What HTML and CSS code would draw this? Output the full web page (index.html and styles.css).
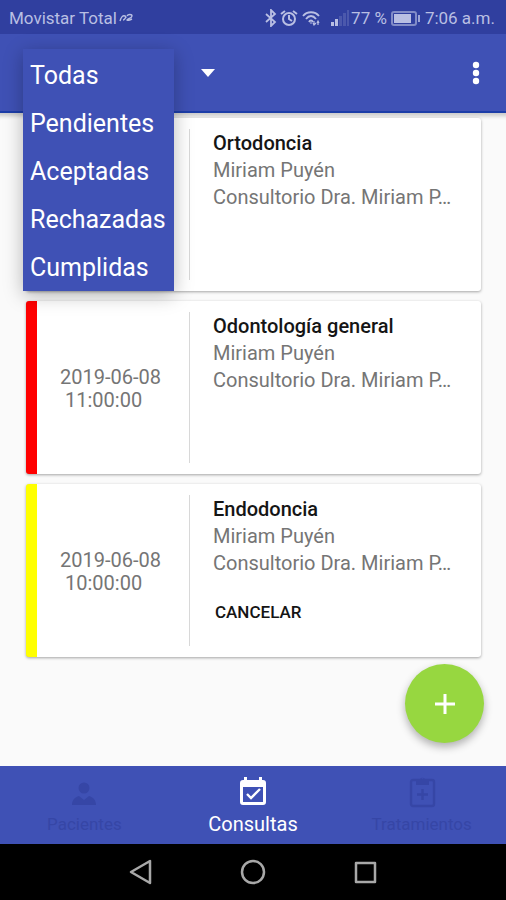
FILE: index.html
```html
<!DOCTYPE html>
<html lang="es">
<head>
<meta charset="utf-8">
<meta name="viewport" content="width=device-width, initial-scale=1">
<title>Consultas</title>
<link rel="stylesheet" href="styles.css">
</head>
<body>
<div class="status">
  <span class="carrier">Movistar Total</span>
  <svg class="mark" width="14" height="10" viewBox="0 0 14 10" fill="none" stroke="currentColor" stroke-width="1.4"><path d="M1 8C2 4 4 2 6 3S5 7 4 7M6 3c1 0 1 1 1 2M8 3c1-2 5-2 5 0S8 6 8 7s3 0 5-1"/></svg>
  <div class="indicators">
    <svg width="12" height="18" viewBox="0 0 12 18" fill="none" stroke="currentColor" stroke-width="1.8"><path d="M1 5l9 8-4 4V1l4 4-9 8"/></svg>
    <svg class="alarm" width="18" height="18" viewBox="0 0 18 18" fill="none" stroke="currentColor" stroke-width="2"><circle cx="9" cy="10" r="6"/><path d="M9 6v4l3 2M1 5l4-3M17 5l-4-3"/></svg>
    <svg class="wifi" width="18" height="16" viewBox="0 0 18 16" fill="none" stroke="currentColor" stroke-width="1.8"><path d="M1 6C5 1 13 1 17 6M4 9c3-4 7-4 10 0M7 12c1-2 3-2 4 0"/><path d="M8 13h2M12 11v4M11 13l1 2 2-2M16 15v-4M15 13l1-2 1 2" stroke-width="1.2"/></svg>
    <svg class="signal" width="19" height="16" viewBox="0 0 19 16" fill="currentColor"><path d="M1 12h3v4H1zM5 9h3v7H5z"/><path opacity=".2" d="M9 6h3v10H9zM13 3h3v13h-3zM17 0h2v16h-2z"/></svg>
    <span>77 %</span>
    <svg class="battery" width="29" height="15" viewBox="0 0 29 15"><rect x="1" y="1" width="24" height="13" rx="2" fill="none" stroke="currentColor" stroke-width="2" opacity=".6"/><path fill="currentColor" d="M3 3h17v9H3z"/><path fill="currentColor" opacity=".8" d="M27 4h2v7h-2z"/></svg>
    <span>7:06 a.m.</span>
  </div>
</div>

<header class="appbar">
  <div class="filter">
    <button class="filter-toggle" type="button" aria-label="Filtrar consultas" aria-expanded="true">
      <svg width="14" height="8" viewBox="0 0 14 8" fill="currentColor"><path d="M0 0h14L7 8z"/></svg>
    </button>
    <ul class="menu">
      <li><button type="button">Todas</button></li>
      <li><button type="button">Pendientes</button></li>
      <li><button type="button">Aceptadas</button></li>
      <li><button type="button">Rechazadas</button></li>
      <li><button type="button">Cumplidas</button></li>
    </ul>
  </div>
  <button class="more" type="button" aria-label="Más opciones">
    <svg width="8" height="24" viewBox="0 0 8 24" fill="currentColor"><circle cx="4" cy="4" r="3.2"/><circle cx="4" cy="12" r="3.2"/><circle cx="4" cy="20" r="3.2"/></svg>
  </button>
</header>

<main class="list">
  <article class="card">
    <div class="when"></div>
    <div class="info">
      <h2>Ortodoncia</h2>
      <p>Miriam Puyén</p>
      <p>Consultorio Dra. Miriam P…</p>
    </div>
  </article>
  <article class="card rejected">
    <div class="when"><time datetime="2019-06-08T11:00">2019-06-08 <span>11:00:00</span></time></div>
    <div class="info">
      <h2>Odontología general</h2>
      <p>Miriam Puyén</p>
      <p>Consultorio Dra. Miriam P…</p>
    </div>
  </article>
  <article class="card pending">
    <div class="when"><time datetime="2019-06-08T10:00">2019-06-08 <span>10:00:00</span></time></div>
    <div class="info">
      <h2>Endodoncia</h2>
      <p>Miriam Puyén</p>
      <p>Consultorio Dra. Miriam P…</p>
      <button class="cancel" type="button">CANCELAR</button>
    </div>
  </article>
  <button class="fab" type="button" aria-label="Nueva consulta">
    <svg width="22" height="22" viewBox="0 0 22 22" stroke="currentColor" stroke-width="3"><path d="M11 1v20M1 11h20"/></svg>
  </button>
</main>

<nav class="tabs">
  <a class="tab" href="#pacientes">
    <svg width="32" height="32" viewBox="0 0 32 32" fill="currentColor"><circle cx="16" cy="12" r="5.5"/><path d="M4 29c0-5 3-8 7-9l5 4 5-4c4 1 7 4 7 9z"/></svg>
    <span>Pacientes</span>
  </a>
  <a class="tab active" href="#consultas" aria-current="page">
    <svg width="32" height="32" viewBox="0 0 32 32"><path fill="currentColor" fill-rule="evenodd" d="M7 1h3v3h12V1h3v3h1a3 3 0 0 1 3 3v19a3 3 0 0 1-3 3H6a3 3 0 0 1-3-3V7a3 3 0 0 1 3-3h1zM6 11v15h20V11z"/><path fill="none" stroke="currentColor" stroke-width="2.4" d="M10 18l4 4 9-9"/></svg>
    <span>Consultas</span>
  </a>
  <a class="tab" href="#tratamientos">
    <svg width="32" height="32" viewBox="0 0 32 32" fill="none" stroke="currentColor" stroke-width="2.4"><rect x="5" y="4" width="23" height="26" rx="2"/><path d="M16.500 13v11M11 18.500h11"/><path fill="currentColor" stroke="none" fill-rule="evenodd" d="M10 3h4a3 3 0 0 1 5 0h4v6H10zM16.500 2a1 1 0 1 0 0 2 1 1 0 0 0 0-2z"/></svg>
    <span>Tratamientos</span>
  </a>
</nav>

<div class="system">
  <button type="button" aria-label="Atrás"><svg width="26" height="26" viewBox="0 0 26 26"><path d="M22 2v22L3 13z"/></svg></button>
  <button type="button" aria-label="Inicio"><svg width="26" height="26" viewBox="0 0 26 26"><circle cx="13" cy="13" r="11"/></svg></button>
  <button type="button" aria-label="Recientes"><svg width="26" height="26" viewBox="0 0 26 26"><path d="M4 4h19v19H4z"/></svg></button>
</div>
</body>
</html>
```
FILE: styles.css
```css
* { box-sizing: border-box; }

body {
  margin: 0;
  min-height: 100vh;
  display: flex;
  flex-direction: column;
  background: #fafafa;
  color: #757575;
  font-family: Roboto, "Liberation Sans", sans-serif;
}

button {
  margin: 0;
  padding: 0;
  border: 0;
  background: none;
  color: inherit;
  font: inherit;
  cursor: pointer;
}

svg { display: block; flex: none; }

.status {
  display: flex;
  align-items: center;
  height: 34px;
  padding: 2px 11px 0 9px;
  background: #303f9f;
  color: #b9bfe3;
  font-size: 17px;
  white-space: nowrap;
}

.mark { margin-left: 2px; }

.indicators {
  display: flex;
  align-items: center;
  margin-left: auto;
}

.alarm { margin-left: 3px; }
.wifi { margin-left: 4px; }
.signal { margin: 0 2px 0 10px; }
.battery { margin: 0 5px 0 4px; }

.appbar {
  display: flex;
  align-items: center;
  justify-content: space-between;
  height: 79px;
  padding: 0 14px 0 23px;
  background: #3f51b5;
  border-bottom: 2px solid #1c3da8;
  color: #fff;
}

.filter { position: relative; }

.filter-toggle {
  display: flex;
  align-items: center;
  justify-content: flex-end;
  width: 192px;
  height: 48px;
}

.menu {
  position: absolute;
  top: 0;
  left: 0;
  z-index: 2;
  margin: 0;
  padding: 1px 0;
  list-style: none;
  background: #3f51b5;
  box-shadow: 0 4px 18px rgba(0, 0, 0, .28);
}

.menu button {
  display: block;
  width: 151px;
  height: 48px;
  padding: 4px 7px 0;
  font-size: 25px;
  text-align: left;
}

.more {
  display: grid;
  place-items: center;
  width: 32px;
  height: 48px;
}

.list {
  flex: 1;
  display: flex;
  flex-direction: column;
  gap: 10px;
  padding: 5px 25px 0 26px;
  box-shadow: inset 0 7px 4px -4px rgba(0, 0, 0, .2);
}

.card {
  display: flex;
  height: 173px;
  padding: 11px 0;
  border-left: 11px solid #fff;
  border-radius: 3px;
  background: #fff;
  box-shadow: 0 1px 3px rgba(0, 0, 0, .35);
}

.rejected { border-left-color: #f00; }
.pending { border-left-color: #ff0; }

.when {
  display: grid;
  place-items: center;
  flex: none;
  width: 153px;
  padding: 2px 0 0;
  border-right: 1px solid #d8d8d8;
  font-size: 20px;
  line-height: 23px;
}

.when time { width: 106px; }
.when span { display: block; padding-left: 5px; }

.info {
  flex: 1;
  min-width: 0;
  padding: 1px 0 0 23px;
  font-size: 20px;
  line-height: 27px;
}

.info h2 {
  margin: 0;
  color: #151515;
  font-size: 20px;
  font-weight: 500;
}

.info p {
  margin: 0;
  overflow: hidden;
  white-space: nowrap;
  text-overflow: ellipsis;
}

.cancel {
  margin-top: 22px;
  padding: 0 2px;
  color: #151515;
  font-size: 17px;
  font-weight: 500;
  line-height: 27px;
}

.fab {
  display: grid;
  place-items: center;
  align-self: flex-end;
  width: 79px;
  height: 79px;
  margin: -3px -3px 20px 0;
  border-radius: 50%;
  background: #97d740;
  color: #fff;
  box-shadow: 0 4px 9px rgba(0, 0, 0, .3);
}

.tabs {
  display: flex;
  height: 78px;
  background: #3f51b5;
}

.tab {
  flex: 1;
  display: flex;
  flex-direction: column;
  align-items: center;
  gap: 5px;
  padding-top: 10px;
  color: #3646a6;
  font-size: 17px;
  line-height: 22px;
  text-decoration: none;
}

.active {
  color: #fff;
  font-size: 20px;
}

.system {
  display: flex;
  align-items: center;
  justify-content: center;
  gap: 86px;
  height: 56px;
  background: #000;
}

.system svg {
  fill: none;
  stroke: #a8a8a8;
  stroke-width: 2.5;
  stroke-linejoin: round;
}
```
